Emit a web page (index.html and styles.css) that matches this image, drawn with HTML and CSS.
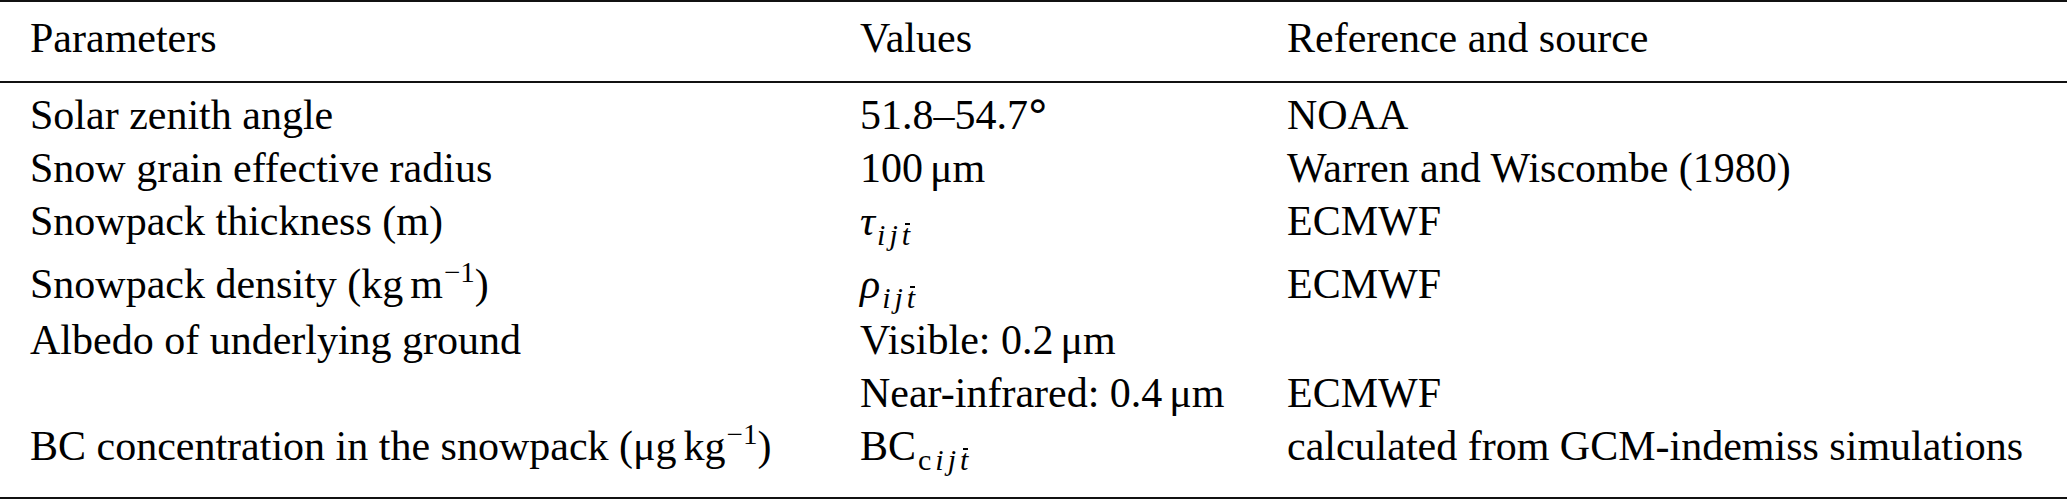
FILE: index.html
```html
<!DOCTYPE html>
<html>
<head>
<meta charset="utf-8">
<link rel="stylesheet" href="styles.css">
</head>
<body>
<div class="tbl">
  <div class="row head">
    <div class="c1">Parameters</div>
    <div class="c2">Values</div>
    <div class="c3">Reference and source</div>
  </div>
  <div class="body">
    <div class="row">
      <div class="c1">Solar zenith angle</div>
      <div class="c2">51.8–54.7<span class="deg">∘</span></div>
      <div class="c3">NOAA</div>
    </div>
    <div class="row">
      <div class="c1">Snow grain effective radius</div>
      <div class="c2">100<span class="thin"></span>μm</div>
      <div class="c3">Warren and Wiscombe (1980)</div>
    </div>
    <div class="row r-thick">
      <div class="c1">Snowpack thickness (m)</div>
      <div class="c2"><span class="it">τ</span><span class="sub"><span class="it mi">i</span><span class="it mi">j</span><span class="it tbar">t</span></span></div>
      <div class="c3">ECMWF</div>
    </div>
    <div class="row r-dens">
      <div class="c1">Snowpack density (kg<span class="thin"></span>m<span class="sup">−1</span>)</div>
      <div class="c2"><span class="it">ρ</span><span class="sub"><span class="it mi">i</span><span class="it mi">j</span><span class="it tbar">t</span></span></div>
      <div class="c3">ECMWF</div>
    </div>
    <div class="row">
      <div class="c1">Albedo of underlying ground</div>
      <div class="c2">Visible: 0.2<span class="thin"></span>μm</div>
      <div class="c3"></div>
    </div>
    <div class="row">
      <div class="c1"></div>
      <div class="c2">Near-infrared: 0.4<span class="thin"></span>μm</div>
      <div class="c3">ECMWF</div>
    </div>
    <div class="row">
      <div class="c1">BC concentration in the snowpack (μg<span class="thin"></span>kg<span class="sup">−1</span>)</div>
      <div class="c2">BC<span class="sub"><span class="mi">c</span><span class="it mi">i</span><span class="it mi">j</span><span class="it tbar">t</span></span></div>
      <div class="c3">calculated from GCM-indemiss simulations</div>
    </div>
  </div>
</div>
</body>
</html>
```

FILE: styles.css
```css
html, body {
  margin: 0;
  padding: 0;
  background: #fff;
}

body {
  width: 2067px;
  height: 500px;
  overflow: hidden;
  font-family: "Liberation Serif", "Times New Roman", serif;
  font-size: 42px;
  color: #000;
}

.tbl {
  box-sizing: border-box;
  width: 2067px;
  height: 499px;
  border-top: 2px solid #111;
  border-bottom: 2px solid #111;
}

.row {
  display: grid;
  grid-template-columns: 829px 427px 1fr;
  line-height: 53px;
  white-space: nowrap;
}

.c1 {
  padding-left: 30px;
}

.c2, .c3 {
  padding-left: 31px;
}

.head {
  padding-top: 10px;
  padding-bottom: 16px;
  border-bottom: 2px solid #111;
}

.body {
  padding-top: 6px;
}

.r-thick {
  padding-bottom: 10px;
}

.r-dens {
  padding-bottom: 3px;
}

.it {
  font-style: italic;
}

.sub {
  font-size: 30px;
  line-height: 0;
  vertical-align: -10px;
  margin-left: 2px;
}

.mi {
  margin-right: 4px;
}

.sup {
  font-size: 29px;
  line-height: 0;
  vertical-align: 16px;
  margin-left: 1px;
}

.deg {
  font-family: "DejaVu Sans", sans-serif;
  font-size: 44px;
  line-height: 0;
  vertical-align: 9px;
  margin-left: -4px;
}

.thin {
  display: inline-block;
  width: 7px;
}

.tbar {
  background-image: linear-gradient(to bottom, transparent 5px, #000 5px, #000 6.5px, transparent 6.5px);
  background-size: 65% 100%;
  background-position: 100% 0;
  background-repeat: no-repeat;
}
```
